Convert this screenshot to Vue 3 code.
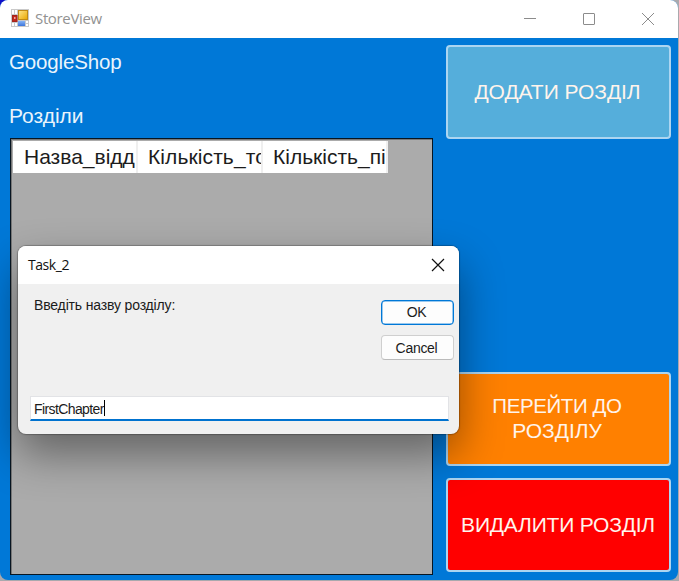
<script setup>
const columns = ['Назва_відд', 'Кількість_то', 'Кількість_пі']
</script>

<template>
  <div class="desktop">
    <div class="window">
      <header class="titlebar">
        <svg class="app-icon" width="18" height="18" viewBox="0 0 18 18">
          <defs>
            <linearGradient id="gold" x1="0" y1="0" x2="1" y2="1">
              <stop offset="0" stop-color="#ffe58a" /><stop offset="1" stop-color="#e9a600" />
            </linearGradient>
            <linearGradient id="blue" x1="0" y1="0" x2="0" y2="1">
              <stop offset="0" stop-color="#86b4f5" /><stop offset="1" stop-color="#3c75dc" />
            </linearGradient>
          </defs>
          <rect width="18" height="18" fill="#c9c9c9" />
          <path d="M1 1h2v4H1zM4 1h2v4H4zM1 14h2v3H1zM4 14h2v3H4zM15 12h2v2h-2zM15 15h2v2h-2z" fill="#fff" />
          <rect x="1.500" y="6.500" width="4.500" height="6" fill="#c3271b" stroke="#a3241c" />
          <rect x="3" y="8" width="1.500" height="2" fill="#f0a79f" />
          <rect x="7.500" y="1.500" width="9" height="9" fill="url(#gold)" stroke="#c18a16" />
          <rect x="7" y="12" width="7" height="5" fill="url(#blue)" />
        </svg>
        <span class="title">StoreView</span>
        <div class="controls">
          <svg width="14" height="14" viewBox="0 0 14 14"><path d="M1 6.500h12" /></svg>
          <svg width="14" height="14" viewBox="0 0 14 14"><rect x="1.500" y="1.500" width="11" height="11" rx="0.500" /></svg>
          <svg width="14" height="14" viewBox="0 0 14 14"><path d="M1 1l12 12M13 1L1 13" /></svg>
        </div>
      </header>
      <main class="client">
        <section class="left">
          <div class="shop">GoogleShop</div>
          <div class="chapters">Розділи</div>
          <div class="grid">
            <div class="grid-head">
              <div v-for="c in columns" :key="c" class="cell"><span>{{ c }}</span></div>
            </div>
          </div>
        </section>
        <aside class="actions">
          <button class="action add">ДОДАТИ РОЗДІЛ</button>
          <button class="action go"><span class="tight">ПЕРЕЙТИ ДО</span><span class="wide">РОЗДІЛУ</span></button>
          <button class="action remove">ВИДАЛИТИ РОЗДІЛ</button>
        </aside>
      </main>
    </div>

    <div class="dialog">
      <header class="dialog-bar">
        <span class="dialog-title">Task_2</span>
        <svg width="14" height="14" viewBox="0 0 14 14"><path d="M1 1l12 12M13 1L1 13" /></svg>
      </header>
      <div class="dialog-body">
        <div class="dialog-top">
          <span class="prompt">Введіть назву розділу:</span>
          <div class="dialog-buttons">
            <button class="btn primary">OK</button>
            <button class="btn">Cancel</button>
          </div>
        </div>
        <div class="field"><span class="value">FirstChapter</span><i class="caret"></i></div>
      </div>
    </div>
  </div>
</template>

<style>
body { margin: 0; overflow: hidden; }
</style>

<style scoped>
* { box-sizing: border-box; }
button { padding: 0; margin: 0; }
.desktop {
  position: relative;
  width: 679px;
  height: 581px;
  overflow: hidden;
  background: linear-gradient(135deg, #1010c8 0 6px, #a9a9ad 6px);
  font-family: "Liberation Sans", Arial, sans-serif;
}
.window {
  display: flex;
  flex-direction: column;
  width: 678px;
  height: 580px;
  border-radius: 8px;
  overflow: hidden;
  background: #0078d7;
}
.titlebar {
  display: flex;
  align-items: center;
  flex: none;
  height: 38px;
  padding: 0 23px 0 11px;
  background: #fff;
}
.app-icon { display: block; margin-top: -2px; }
.title {
  margin: -2px 0 0 6px;
  font-family: "Open Sans", "Noto Sans", sans-serif;
  font-size: 15px;
  letter-spacing: -0.35px;
  line-height: 20px;
  color: #929292;
}
.controls { display: flex; gap: 45px; margin-left: auto; }
.controls svg { display: block; fill: none; stroke: #8c8c8c; stroke-width: 1; }
.client {
  display: flex;
  flex: 1;
  min-height: 0;
  justify-content: space-between;
  padding: 7px 7px 5px 9px;
}
.left { display: flex; flex-direction: column; width: 425px; }
.shop, .chapters { color: #eaf4fc; line-height: 24px; }
.shop { margin-top: 5px; font-size: 20.5px; letter-spacing: -0.15px; }
.chapters { margin-top: 30px; font-size: 21px; }
.grid {
  flex: 1;
  margin: 10px 0 0 1px;
  width: 423px;
  border: 1px solid #071521;
  box-shadow: inset 1px 1px #777;
  background: #ababab;
}
.grid-head { display: flex; width: 375px; height: 32px; margin: 2px 0 0 2px; background: #fff; }
.cell {
  display: flex;
  align-items: center;
  width: 125px;
  padding: 0 0 0 11px;
  border-right: 2px solid #efefef;
  font-size: 21px;
  line-height: 26px;
  color: #1c1c1c;
}
.cell + .cell { padding-left: 10px; }
.cell span { flex: 1; overflow: hidden; white-space: nowrap; }
.cell:nth-child(2) { letter-spacing: 0.1px; }
.actions { display: flex; flex-direction: column; width: 225px; }
.action {
  display: flex;
  flex-direction: column;
  align-items: center;
  justify-content: center;
  flex: none;
  height: 94px;
  padding-bottom: 2px;
  border: 2px solid #acd5f1;
  border-radius: 4px;
  font: 21px/25px "Liberation Sans", Arial, sans-serif;
  color: #fff4ec;
  white-space: nowrap;
}
.add { background: #55aedb; padding-right: 2px; letter-spacing: -0.05px; }
.go { margin-top: 233px; padding-right: 3px; background: #ff8000; }
.tight { font-size: 20.5px; letter-spacing: -0.4px; }
.remove { margin-top: 12px; background: #f00; letter-spacing: -0.2px; padding-right: 1px; }
.dialog {
  position: absolute;
  left: 18px;
  top: 246px;
  width: 441px;
  height: 188px;
  border-radius: 8px;
  overflow: hidden;
  background: #f0f0f0;
  box-shadow: 0 0 1px 1px rgba(0, 0, 0, 0.25), 0 20px 44px rgba(0, 0, 0, 0.42);
}
.dialog-bar {
  display: flex;
  align-items: center;
  justify-content: space-between;
  height: 38px;
  padding: 0 14px 0 10px;
  background: #fff;
}
.dialog-bar svg { fill: none; stroke: #111; stroke-width: 1.200; }
.dialog-title { margin-top: -2px; font-family: "Open Sans", "Noto Sans", sans-serif; font-size: 14px; letter-spacing: -0.45px; color: #111; }
.dialog-body { padding: 16px 5px 0 12px; }
.dialog-top { display: flex; justify-content: space-between; height: 96px; }
.prompt { margin: -4px 0 0 4px; font-size: 14px; line-height: 18px; letter-spacing: -0.16px; color: #1b1b1b; }
.dialog-buttons { display: flex; flex-direction: column; gap: 10px; }
.btn {
  width: 73px;
  height: 25px;
  padding-right: 2px;
  border: 1px solid #cfcfcf;
  border-bottom-color: #bbb;
  border-radius: 4px;
  background: #fdfdfd;
  font: 14px/18px "Liberation Sans", Arial, sans-serif;
  letter-spacing: -0.3px;
  color: #1b1b1b;
}
.primary { padding-bottom: 1px; border: 1px solid #0078d7; box-shadow: inset 0 0 0 0.500px #3794df; }
.field {
  display: flex;
  align-items: center;
  width: 419px;
  height: 25px;
  padding-left: 3px;
  border: 1px solid #e2e3e6;
  border-bottom: 2px solid #0072cf;
  background: #fff;
}
.value { margin-top: 1px; font-size: 14px; line-height: 18px; letter-spacing: -0.6px; color: #1b1b1b; }
.caret { width: 1px; height: 16px; background: #000; }
</style>
